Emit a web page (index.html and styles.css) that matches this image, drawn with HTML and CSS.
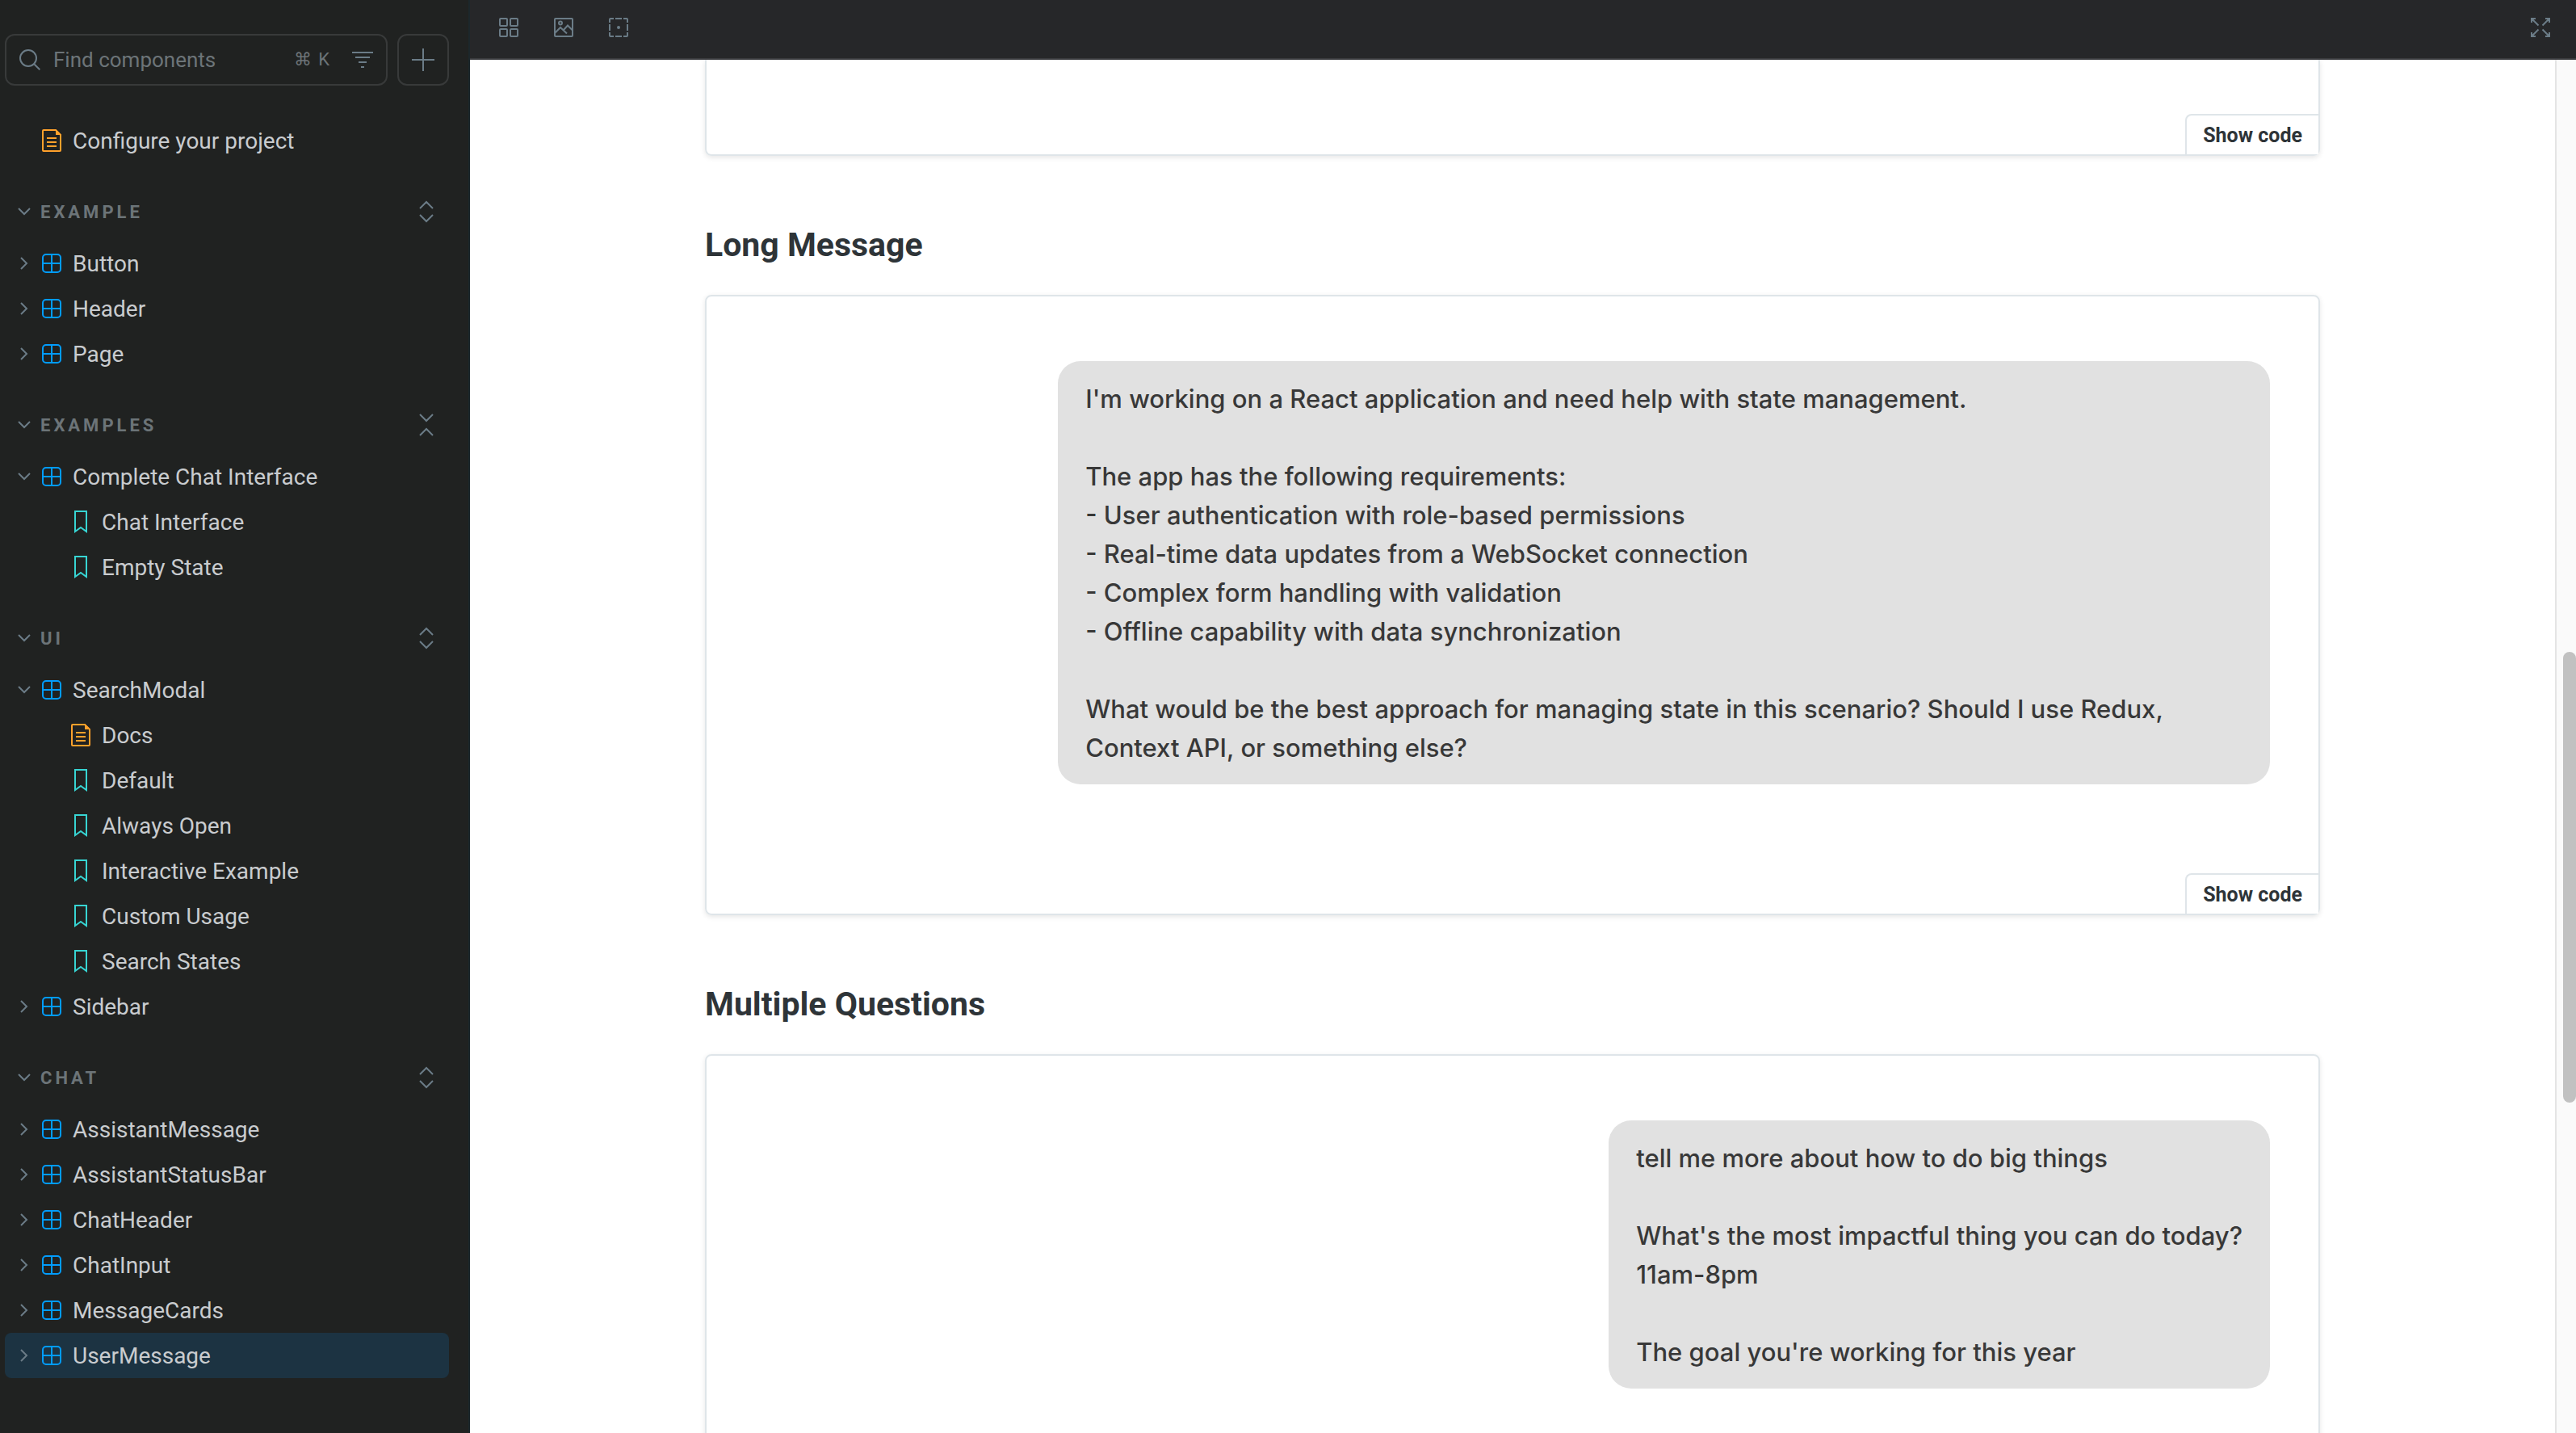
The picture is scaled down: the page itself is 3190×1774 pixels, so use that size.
FILE: index.html
```html
<!DOCTYPE html>
<html lang="en">
<head>
<meta charset="utf-8">
<meta name="viewport" content="width=device-width, initial-scale=1">
<title>UserMessage - Docs</title>
<link rel="stylesheet" href="styles.css">
</head>
<body>
<svg class="sprite" aria-hidden="true">
  <symbol id="search" viewBox="0 0 26 26"><circle cx="11" cy="11" r="10" fill="none" stroke="currentColor" stroke-width="2"/><path d="M18.200 18.200L25.300 25.300" fill="none" stroke="currentColor" stroke-width="2"/></symbol>
  <symbol id="filter" viewBox="0 0 26 20"><path d="M0 1h26M4 7h18M8 13h10M11 19h4" fill="none" stroke="currentColor" stroke-width="2"/></symbol>
  <symbol id="plus" viewBox="0 0 28 28"><path d="M14 0v28M0 14h28" fill="none" stroke="currentColor" stroke-width="2"/></symbol>
  <symbol id="right" viewBox="0 0 10 16"><path d="M1 1l7 7-7 7" fill="none" stroke="currentColor" stroke-width="2"/></symbol>
  <symbol id="down" viewBox="0 0 16 10"><path d="M1 1l7 7 7-7" fill="none" stroke="currentColor" stroke-width="2"/></symbol>
  <symbol id="expand" viewBox="0 0 18 28"><path d="M1 10l8-8 8 8M1 18l8 8 8-8" fill="none" stroke="currentColor" stroke-width="2"/></symbol>
  <symbol id="collapse" viewBox="0 0 18 28"><path d="M1 1l8 8 8-8M1 27l8-8 8 8" fill="none" stroke="currentColor" stroke-width="2"/></symbol>
  <symbol id="component" viewBox="0 0 24 24"><rect x="1" y="1" width="22" height="22" rx="4" fill="none" stroke="currentColor" stroke-width="2"/><path d="M12 1v22M1 12h22" stroke="currentColor" stroke-width="2"/></symbol>
  <symbol id="document" viewBox="0 0 24 28"><path d="M2 1h15l6 6v19a1 1 0 0 1-1 1H2a1 1 0 0 1-1-1V2a1 1 0 0 1 1-1z" fill="none" stroke="currentColor" stroke-width="2"/><path d="M17 0v7h7z" fill="currentColor"/><path d="M6 11h12M6 16h12M6 21h12" stroke="currentColor" stroke-width="2"/></symbol>
  <symbol id="bookmark" viewBox="0 0 16 28"><path d="M1 1h14v25l-7-5-7 5z" fill="none" stroke="currentColor" stroke-width="2"/></symbol>
  <symbol id="grid" viewBox="0 0 24 24"><g fill="none" stroke="currentColor" stroke-width="2"><rect x="1" y="1" width="9" height="9" rx="1"/><rect x="14" y="1" width="9" height="9" rx="1"/><rect x="1" y="14" width="9" height="9" rx="1"/><rect x="14" y="14" width="9" height="9" rx="1"/></g></symbol>
  <symbol id="picture" viewBox="0 0 24 24"><g fill="none" stroke="currentColor" stroke-width="2"><rect x="1" y="1" width="22" height="22" rx="1"/><circle cx="8" cy="6.500" r="2"/><path d="M1 19l7-7 8 7.500M12 15l5-5.500 6 6"/></g></symbol>
  <symbol id="outline" viewBox="0 0 24 24"><path d="M1 6V2a1 1 0 0 1 1-1h4M8 1h8M18 1h4a1 1 0 0 1 1 1v4M23 8v8M23 18v4a1 1 0 0 1-1 1h-4M16 23H8M6 23H2a1 1 0 0 1-1-1v-4M1 16V8" fill="none" stroke="currentColor" stroke-width="2"/><circle cx="12" cy="12" r="2" fill="currentColor"/></symbol>
  <symbol id="fullscreen" viewBox="0 0 24 24"><g fill="none" stroke="currentColor" stroke-width="2"><path d="M1 6V1h5M1 1l8.500 8.500M18 1h5v5M23 1l-8.500 8.500M1 18v5h5M1 23l8.500-8.500M18 23h5v-5M23 23l-8.500-8.500"/></g></symbol>
</svg>

<div class="app">
  <aside class="sidebar">
    <div class="finder">
      <div class="search">
        <svg class="i26"><use href="#search"/></svg>
        <input class="search-input" type="text" placeholder="Find components" aria-label="Find components">
        <span class="shortcut"><kbd>⌘</kbd><kbd>K</kbd></span>
        <button class="icon-button filter" aria-label="Filter"><svg class="filter-icon"><use href="#filter"/></svg></button>
      </div>
      <button class="icon-button create" aria-label="Create a new story"><svg class="i28"><use href="#plus"/></svg></button>
    </div>

    <nav aria-label="Stories">
      <ul class="list">
        <li><a class="row" href="#"><span class="twist"></span><svg class="doc"><use href="#document"/></svg>Configure your project</a></li>
      </ul>

      <div class="group">
        <button class="group-title"><svg class="down"><use href="#down"/></svg>EXAMPLE</button>
        <button class="icon-button" aria-label="Expand all"><svg class="updown"><use href="#expand"/></svg></button>
      </div>
      <ul class="list">
        <li><a class="row" href="#"><span class="twist"><svg class="right"><use href="#right"/></svg></span><svg class="comp"><use href="#component"/></svg>Button</a></li>
        <li><a class="row" href="#"><span class="twist"><svg class="right"><use href="#right"/></svg></span><svg class="comp"><use href="#component"/></svg>Header</a></li>
        <li><a class="row" href="#"><span class="twist"><svg class="right"><use href="#right"/></svg></span><svg class="comp"><use href="#component"/></svg>Page</a></li>
      </ul>

      <div class="group">
        <button class="group-title"><svg class="down"><use href="#down"/></svg>EXAMPLES</button>
        <button class="icon-button" aria-label="Collapse all"><svg class="updown"><use href="#collapse"/></svg></button>
      </div>
      <ul class="list">
        <li><a class="row" href="#"><span class="twist"><svg class="down"><use href="#down"/></svg></span><svg class="comp"><use href="#component"/></svg>Complete Chat Interface</a>
          <ul class="list nested">
            <li><a class="row" href="#"><span class="twist"></span><svg class="mark"><use href="#bookmark"/></svg>Chat Interface</a></li>
            <li><a class="row" href="#"><span class="twist"></span><svg class="mark"><use href="#bookmark"/></svg>Empty State</a></li>
          </ul>
        </li>
      </ul>

      <div class="group">
        <button class="group-title"><svg class="down"><use href="#down"/></svg>UI</button>
        <button class="icon-button" aria-label="Expand all"><svg class="updown"><use href="#expand"/></svg></button>
      </div>
      <ul class="list">
        <li><a class="row" href="#"><span class="twist"><svg class="down"><use href="#down"/></svg></span><svg class="comp"><use href="#component"/></svg>SearchModal</a>
          <ul class="list nested">
            <li><a class="row" href="#"><span class="twist"></span><svg class="doc"><use href="#document"/></svg>Docs</a></li>
            <li><a class="row" href="#"><span class="twist"></span><svg class="mark"><use href="#bookmark"/></svg>Default</a></li>
            <li><a class="row" href="#"><span class="twist"></span><svg class="mark"><use href="#bookmark"/></svg>Always Open</a></li>
            <li><a class="row" href="#"><span class="twist"></span><svg class="mark"><use href="#bookmark"/></svg>Interactive Example</a></li>
            <li><a class="row" href="#"><span class="twist"></span><svg class="mark"><use href="#bookmark"/></svg>Custom Usage</a></li>
            <li><a class="row" href="#"><span class="twist"></span><svg class="mark"><use href="#bookmark"/></svg>Search States</a></li>
          </ul>
        </li>
        <li><a class="row" href="#"><span class="twist"><svg class="right"><use href="#right"/></svg></span><svg class="comp"><use href="#component"/></svg>Sidebar</a></li>
      </ul>

      <div class="group">
        <button class="group-title"><svg class="down"><use href="#down"/></svg>CHAT</button>
        <button class="icon-button" aria-label="Expand all"><svg class="updown"><use href="#expand"/></svg></button>
      </div>
      <ul class="list">
        <li><a class="row" href="#"><span class="twist"><svg class="right"><use href="#right"/></svg></span><svg class="comp"><use href="#component"/></svg>AssistantMessage</a></li>
        <li><a class="row" href="#"><span class="twist"><svg class="right"><use href="#right"/></svg></span><svg class="comp"><use href="#component"/></svg>AssistantStatusBar</a></li>
        <li><a class="row" href="#"><span class="twist"><svg class="right"><use href="#right"/></svg></span><svg class="comp"><use href="#component"/></svg>ChatHeader</a></li>
        <li><a class="row" href="#"><span class="twist"><svg class="right"><use href="#right"/></svg></span><svg class="comp"><use href="#component"/></svg>ChatInput</a></li>
        <li><a class="row" href="#"><span class="twist"><svg class="right"><use href="#right"/></svg></span><svg class="comp"><use href="#component"/></svg>MessageCards</a></li>
        <li><a class="row selected" href="#" aria-current="page"><span class="twist"><svg class="right"><use href="#right"/></svg></span><svg class="comp"><use href="#component"/></svg>UserMessage</a></li>
      </ul>
    </nav>
  </aside>

  <div class="main">
    <header class="toolbar">
      <div class="tools">
        <button class="icon-button" aria-label="Apply a grid"><svg class="i24"><use href="#grid"/></svg></button>
        <button class="icon-button" aria-label="Change the background"><svg class="i24"><use href="#picture"/></svg></button>
        <button class="icon-button" aria-label="Apply outlines"><svg class="i24"><use href="#outline"/></svg></button>
      </div>
      <button class="icon-button" aria-label="Go full screen"><svg class="i24"><use href="#fullscreen"/></svg></button>
    </header>

    <div class="canvas">
      <main class="docs">
        <div class="docs-content">
          <section class="card card-scrolled">
            <button class="show-code">Show code</button>
          </section>

          <h3 class="story-title">Long Message</h3>
          <section class="card">
            <div class="story">
              <p class="bubble">I'm working on a React application and need help with state management.

The app has the following requirements:
- User authentication with role-based permissions
- Real-time data updates from a WebSocket connection
- Complex form handling with validation
- Offline capability with data synchronization

What would be the best approach for managing state in this scenario? Should I use Redux, Context API, or something else?</p>
            </div>
            <button class="show-code">Show code</button>
          </section>

          <h3 class="story-title">Multiple Questions</h3>
          <section class="card">
            <div class="story">
              <p class="bubble">tell me more about how to do big things

What's the most impactful thing you can do today?
11am-8pm

The goal you're working for this year</p>
            </div>
          </section>
        </div>
      </main>
      <div class="scroll-track"><div class="scroll-thumb"></div></div>
    </div>
  </div>
</div>
</body>
</html>
```
FILE: styles.css
```css
:root {
  --side-bg: #202221;
  --bar-bg: #262729;
  --icon: #6b7c87;
  --muted: #6c7478;
  --text: #c9cccf;
  --line: #dfe5e9;
}

* { box-sizing: border-box; }

body {
  margin: 0;
  background: #fff;
  font-family: Roboto, "Open Sans", sans-serif;
}

button, input, kbd { font: inherit; }

.sprite { display: none; }

svg { display: block; flex: none; }

.app {
  display: grid;
  grid-template-columns: 582px 1fr;
  height: 100vh;
  overflow: hidden;
}

/* Sidebar */

.sidebar {
  padding: 42px 24px 0 6px;
  background: var(--side-bg);
  border-right: 2px solid #1c272b;
  color: var(--text);
  font-size: 28px;
  overflow: hidden;
}

.icon-button {
  display: flex;
  align-items: center;
  justify-content: center;
  padding: 0;
  border: 0;
  background: none;
  color: var(--icon);
}

.finder {
  display: flex;
  gap: 12px;
  margin-bottom: 40px;
}

.search {
  display: flex;
  flex: 1;
  align-items: center;
  min-width: 0;
  height: 64px;
  padding: 0 16px;
  border: 2px solid #383a3a;
  border-radius: 12px;
  color: var(--icon);
}

.search-input {
  flex: 1;
  min-width: 0;
  height: 56px;
  padding: 0 0 0 16px;
  border: 0;
  outline: 0;
  background: none;
  color: var(--text);
  font-size: 26px;
}

.search-input::placeholder { color: var(--muted); opacity: 1; }

.shortcut {
  display: flex;
  align-items: center;
  gap: 8px;
  margin-right: 28px;
  color: var(--muted);
  font-size: 22px;
  line-height: 28px;
}

.create {
  width: 64px;
  height: 64px;
  border: 2px solid #383a3a;
  border-radius: 12px;
}

.list {
  margin: 0;
  padding: 0;
  list-style: none;
}

.row {
  display: flex;
  align-items: center;
  gap: 14px;
  height: 56px;
  padding-left: 16px;
  border-radius: 8px;
  color: var(--text);
  text-decoration: none;
}

.nested .row { padding-left: 52px; }

.selected { background: #1c3342; }

.twist {
  display: flex;
  justify-content: center;
  width: 16px;
  color: var(--icon);
}

.group {
  display: flex;
  align-items: center;
  justify-content: space-between;
  height: 56px;
  margin: 32px 0 8px;
  padding: 0 19px 0 16px;
}

.group-title {
  display: flex;
  align-items: center;
  gap: 12px;
  padding: 0;
  border: 0;
  background: none;
  color: var(--muted);
  font-size: 22px;
  font-weight: 700;
  letter-spacing: 4px;
}

.i24 { width: 24px; height: 24px; }
.i26 { width: 26px; height: 26px; }
.i28 { width: 28px; height: 28px; }
.filter-icon { width: 26px; height: 20px; }
.down { width: 16px; height: 10px; color: var(--icon); }
.right { width: 10px; height: 16px; }
.updown { width: 18px; height: 28px; }
.comp { width: 24px; height: 24px; color: #029cfd; }
.doc { width: 24px; height: 28px; color: #ffa12b; }
.mark { width: 24px; height: 28px; color: #37d5d3; }

/* Toolbar */

.main {
  display: flex;
  flex-direction: column;
  min-width: 0;
  min-height: 0;
}

.toolbar {
  display: flex;
  flex: none;
  align-items: center;
  justify-content: space-between;
  height: 74px;
  padding: 0 32px 4px 36px;
  background: var(--bar-bg);
  border-bottom: 2px solid #3a3b3e;
}

.tools { display: flex; gap: 44px; }

/* Docs page */

.canvas {
  display: flex;
  flex: 1;
  min-height: 0;
}

.docs {
  flex: 1;
  min-width: 0;
  padding: 0 40px;
  overflow: hidden;
}

.docs-content {
  max-width: 2000px;
  margin: 0 auto;
}

.card {
  display: flex;
  flex-direction: column;
  border: 2px solid var(--line);
  border-radius: 8px;
  box-shadow: 0 2px 6px rgba(0, 0, 0, 0.1);
}

.card-scrolled {
  padding-top: 67px;
  border-top: 0;
  border-radius: 0 0 8px 8px;
}

.story {
  display: flex;
  justify-content: flex-end;
  padding: 80px 60px 110px;
}

.bubble {
  max-width: 80%;
  margin: 0;
  padding: 23px 34px 21px;
  border-radius: 28px;
  background: #e1e1e1;
  color: #383838;
  font: 500 31px/48px Inter, sans-serif;
  white-space: pre-wrap;
}

.show-code {
  align-self: flex-end;
  height: 50px;
  padding: 0 20px;
  border: solid var(--line);
  border-width: 2px 0 0 2px;
  border-radius: 8px 0 0 0;
  background: #fff;
  color: #2e3438;
  font-size: 25px;
  font-weight: 700;
}

.story-title {
  margin: 84px 0 36px;
  color: #2e3438;
  font-size: 41px;
  font-weight: 700;
  line-height: 52px;
}

.scroll-track {
  display: grid;
  grid-template-rows: 733fr 558fr 409fr;
  width: 26px;
  padding-left: 8px;
  border-left: 2px solid #e4e4e4;
  background: #fafafa;
}

.scroll-thumb {
  grid-row: 2;
  border-radius: 8px;
  background: #c1c1c1;
}
```
